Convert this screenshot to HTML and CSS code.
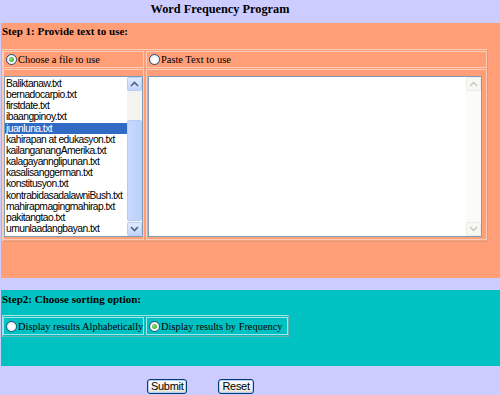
FILE: index.html
```html
<!DOCTYPE html>
<html>
<head>
<meta charset="utf-8">
<link rel="stylesheet" href="styles.css">
</head>
<body>
<div class="title">Word Frequency Program</div>
<div class="step1">
  <div class="heading">Step 1: Provide text to use:</div>
  <div class="t1">
    <div class="cell opt"><span class="radio on"></span>Choose a file to use</div>
    <div class="cell opt"><span class="radio"></span>Paste Text to use</div>
    <div class="cell body">
      <div class="list">
        <div class="items">
          <div class="item">Baliktanaw.txt</div>
          <div class="item">bernadocarpio.txt</div>
          <div class="item">firstdate.txt</div>
          <div class="item">ibaangpinoy.txt</div>
          <div class="item sel">juanluna.txt</div>
          <div class="item">kahirapan at edukasyon.txt</div>
          <div class="item">kailanganangAmerika.txt</div>
          <div class="item">kalagayannglipunan.txt</div>
          <div class="item">kasalisanggerman.txt</div>
          <div class="item">konstitusyon.txt</div>
          <div class="item">kontrabidasadalawniBush.txt</div>
          <div class="item">mahirapmagingmahirap.txt</div>
          <div class="item">pakitangtao.txt</div>
          <div class="item">umunlaadangbayan.txt</div>
        </div>
        <div class="sb">
          <div class="arrow up"><svg width="9" height="6" viewBox="0 0 9 6"><path d="M1 5 L4.5 1.5 L8 5" fill="none" stroke="#4d6185" stroke-width="1.6"/></svg></div>
          <div class="track"><div class="thumb"></div></div>
          <div class="arrow dn"><svg width="9" height="6" viewBox="0 0 9 6"><path d="M1 1 L4.5 4.5 L8 1" fill="none" stroke="#4d6185" stroke-width="1.6"/></svg></div>
        </div>
      </div>
    </div>
    <div class="cell body">
      <div class="ta">
        <div class="ta-space"></div>
        <div class="sb dis">
          <div class="arrow up"><svg width="9" height="6" viewBox="0 0 9 6"><path d="M1 5 L4.5 1.5 L8 5" fill="none" stroke="#c9c7ba" stroke-width="1.4"/></svg></div>
          <div class="track"></div>
          <div class="arrow dn"><svg width="9" height="6" viewBox="0 0 9 6"><path d="M1 1 L4.5 4.5 L8 1" fill="none" stroke="#c9c7ba" stroke-width="1.4"/></svg></div>
        </div>
      </div>
    </div>
  </div>
</div>
<div class="step2">
  <div class="heading">Step2: Choose sorting option:</div>
  <div class="t2">
    <div class="cell opt c1"><span class="radio"></span>Display results Alphabetically</div>
    <div class="cell opt"><span class="radio on"></span>Display results by Frequency</div>
  </div>
</div>
<div class="buttons">
  <span class="btn">Submit</span>
  <span class="btn">Reset</span>
</div>
</body>
</html>
```
FILE: styles.css
```css
html, body {
  margin: 0;
  padding: 0;
  background: #ccccff;
  width: 500px;
  height: 395px;
  overflow: hidden;
  font-family: "Liberation Serif", serif;
  color: #000;
}
.title {
  height: 23px;
  text-align: center;
  font-weight: bold;
  font-size: 12.3px;
  line-height: 18px;
  padding-right: 60px;
}
.step1 {
  margin-left: 1px;
  background: #ff9e77;
  height: 255px;
  padding-top: 1px;
  box-sizing: border-box;
}
.heading {
  font-weight: bold;
  font-size: 11px;
  line-height: 14px;
  padding-left: 1px;
  height: 25px;
}
.t1 {
  margin-left: 1px;
  width: 486px;
  box-sizing: border-box;
  border: 1px solid #f7cdb8;
  border-right-color: #d99a80;
  border-bottom-color: #d99a80;
  padding: 1px 0;
  display: grid;
  grid-template-columns: 141px 341px;
  grid-template-rows: 17px 171px;
  column-gap: 2px;
  row-gap: 1px;
}
.cell {
  border: 1px solid #f7cdb8;
  box-sizing: border-box;
}
.opt {
  display: flex;
  align-items: center;
  font-size: 10.4px;
  padding-left: 2px;
  white-space: nowrap;
}
.radio {
  width: 11px;
  height: 11px;
  border-radius: 50%;
  box-sizing: border-box;
  border: 1px solid #1c5180;
  background: radial-gradient(circle at 60% 60%, #ffffff 30%, #dcdcd6 100%);
  margin-right: 1px;
  display: inline-flex;
  align-items: center;
  justify-content: center;
  flex: none;
}
.radio.on::after {
  content: "";
  width: 5px;
  height: 5px;
  border-radius: 50%;
  background: radial-gradient(circle at 40% 40%, #8ee07a, #21a121);
}
.body {
  padding: 6px 0 2px 0;
}
.list {
  display: flex;
  height: 161px;
  border: 1px solid #7f9db9;
  background: #fff;
  width: 139px;
  box-sizing: border-box;
  overflow: hidden;
}
.items {
  flex: 1;
  font-family: "Liberation Sans", Arial, sans-serif;
  font-size: 10.3px;
  letter-spacing: -0.55px;
  line-height: 11.15px;
  padding-top: 1px;
  overflow: hidden;
}
.item {
  padding-left: 1px;
  white-space: nowrap;
}
.item.sel {
  background: #316ac5;
  color: #fff;
}
.sb {
  width: 15px;
  flex: none;
  display: flex;
  flex-direction: column;
  background: #f4f4f0;
}
.arrow {
  height: 14px;
  box-sizing: border-box;
  border: 1px solid #bccdf5;
  border-radius: 2px;
  background: linear-gradient(#e1ebfd, #c3d4fc);
  display: flex;
  align-items: center;
  justify-content: center;
}
.track {
  flex: 1;
  position: relative;
  background: #f3f3ef;
}
.thumb {
  position: absolute;
  left: 0;
  right: 0;
  bottom: 1px;
  height: 101px;
  border: 1px solid #b6cbf8;
  border-radius: 2px;
  background: linear-gradient(90deg, #c9d9fd, #bcd0fb);
  box-sizing: border-box;
}
.ta {
  display: flex;
  height: 161px;
  border: 1px solid #7f9db9;
  background: #fff;
  box-sizing: border-box;
  margin-left: 1px;
  margin-right: 4px;
}
.ta-space { flex: 1; }
.sb.dis { background: #fbfbf9; }
.sb.dis .arrow {
  border-color: #eeede5;
  background: #f7f7f3;
}
.sb.dis .track { background: #fbfbf9; }
.step2 {
  margin-top: 12px;
  margin-left: 1px;
  background: #00c2c2;
  height: 76px;
  padding-top: 2px;
  box-sizing: border-box;
}
.step2 .heading { height: 23px; }
.t2 {
  margin-left: 1px;
  display: inline-grid;
  grid-template-columns: 141px auto;
  column-gap: 2px;
  padding: 1px 0;
  border: 1px solid #a6e4e4;
  border-right-color: #6ab0b0;
  border-bottom-color: #6ab0b0;
}
.t2 .cell {
  border-color: #a6e4e4;
  height: 18px;
  padding-right: 4px;
}
.buttons {
  display: flex;
  padding-left: 147px;
  gap: 31px;
  margin-top: 13px;
}
.btn {
  font-family: "Liberation Sans", Arial, sans-serif;
  font-size: 11px;
  letter-spacing: -0.3px;
  line-height: 13px;
  padding: 0 3px;
  border: 1px solid #003c74;
  border-radius: 3px;
  background: linear-gradient(#ffffff, #ecebe6 80%, #d6d0c5);
  box-shadow: inset 0 0 0 1px #b9d1fa;
}
```
